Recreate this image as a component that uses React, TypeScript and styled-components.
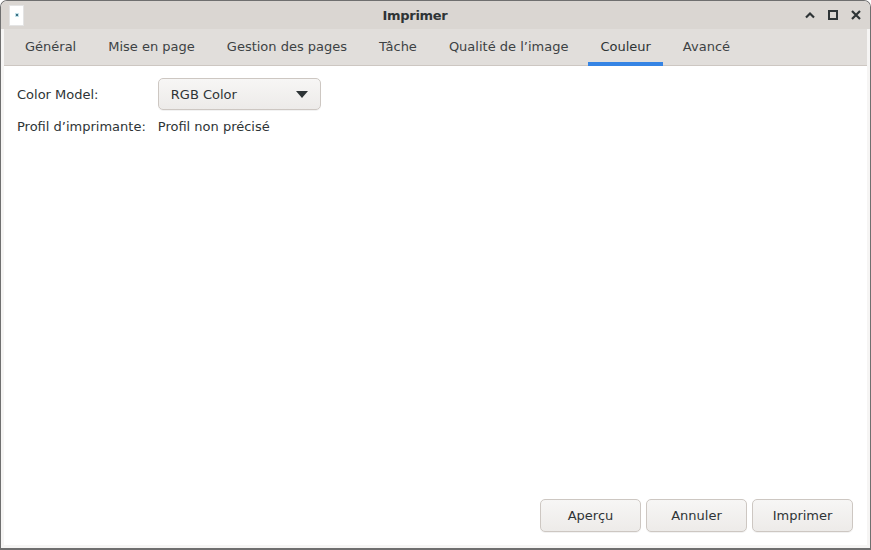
import styled, { createGlobalStyle } from "styled-components";

const GlobalStyle = createGlobalStyle`
  * { box-sizing: border-box; }
  html, body {
    margin: 0;
    padding: 0;
    background: #ffffff;
  }
  body {
    font-family: "DejaVu Sans", "Liberation Sans", sans-serif;
    font-size: 13px;
    color: #2e3436;
  }
`;

const tabs = [
  "Général",
  "Mise en page",
  "Gestion des pages",
  "Tâche",
  "Qualité de l’image",
  "Couleur",
  "Avancé",
];

export default function App() {
  return (
    <>
      <GlobalStyle />
      <Window>
        <TitleBar>
          <AppIcon>
            <IconDot />
          </AppIcon>
          <Title>Imprimer</Title>
          <TitleControls>
            <ControlButton aria-label="Réduire">
              <svg width="12" height="12" viewBox="0 0 12 12">
                <path d="M2 8.5 L6 4.5 L10 8.5" fill="none" stroke="#2e3436" strokeWidth="2.2" />
              </svg>
            </ControlButton>
            <ControlButton aria-label="Agrandir">
              <svg width="12" height="12" viewBox="0 0 12 12">
                <rect x="2" y="2" width="8" height="8" fill="none" stroke="#2e3436" strokeWidth="2" />
              </svg>
            </ControlButton>
            <ControlButton aria-label="Fermer">
              <svg width="12" height="12" viewBox="0 0 12 12">
                <path d="M2 2 L10 10 M10 2 L2 10" fill="none" stroke="#2e3436" strokeWidth="2.2" />
              </svg>
            </ControlButton>
          </TitleControls>
        </TitleBar>
        <Body>
          <TabBar>
            {tabs.map((t) => (
              <Tab key={t} active={t === "Couleur"}>
                {t}
              </Tab>
            ))}
          </TabBar>
          <Page>
            <Form>
              <Label>Color Model:</Label>
              <Combo>
                <span>RGB Color</span>
                <Arrow />
              </Combo>
              <Label>Profil d’imprimante:</Label>
              <Value>Profil non précisé</Value>
            </Form>
            <Footer>
              <Button>Aperçu</Button>
              <Button>Annuler</Button>
              <Button>Imprimer</Button>
            </Footer>
          </Page>
        </Body>
      </Window>
    </>
  );
}

const Window = styled.div`
  width: 871px;
  height: 550px;
  display: flex;
  flex-direction: column;
  border: 1px solid #6f6f6f;
  border-bottom-width: 2px;
  border-radius: 7px 7px 0 0;
  overflow: hidden;
  background: #f6f5f4;
`;

const TitleBar = styled.div`
  height: 28px;
  flex-shrink: 0;
  display: flex;
  align-items: center;
  padding: 0 8px;
  background: #dad6d2;
`;

const AppIcon = styled.div`
  width: 15px;
  height: 21px;
  margin-top: 1px;
  background: #ffffff;
  border: 1px solid #e4e4e4;
  display: flex;
  align-items: center;
  justify-content: center;
`;

const IconDot = styled.div`
  width: 2px;
  height: 2px;
  margin-top: -2px;
  background: #3b6f82;
  box-shadow: 0 0 0 1px #c4e2ea;
`;

const Title = styled.div`
  flex: 1;
  text-align: center;
  font-weight: bold;
  font-size: 13px;
  letter-spacing: -0.3px;
  color: #2e3436;
  padding-left: 2px;
`;

const TitleControls = styled.div`
  display: flex;
  align-items: center;
  gap: 11px;
`;

const ControlButton = styled.div`
  width: 12px;
  height: 12px;
  display: flex;
  svg {
    display: block;
  }
`;

const Body = styled.div`
  flex: 1;
  display: flex;
  flex-direction: column;
  padding: 0 3px 3px 3px;
  min-height: 0;
`;

const TabBar = styled.div`
  height: 37px;
  flex-shrink: 0;
  display: flex;
  padding-left: 5px;
  background: #e1dedb;
  box-shadow: inset 0 -1px #cdc7c2;
`;

const Tab = styled.div<{ active?: boolean }>`
  margin: 0 4px;
  padding: 0 12px 3px 12px;
  display: flex;
  align-items: center;
  color: ${({ active }) => (active ? "#2e3436" : "#3d4244")};
  box-shadow: ${({ active }) => (active ? "inset 0 -4px #3584e4" : "none")};
`;

const Page = styled.div`
  flex: 1;
  display: flex;
  flex-direction: column;
  background: #ffffff;
  padding: 12px 14px 13px 13px;
`;

const Form = styled.div`
  display: grid;
  grid-template-columns: auto auto;
  justify-content: start;
  align-items: center;
  column-gap: 12px;
  row-gap: 8px;
`;

const Label = styled.div`
  line-height: 16px;
  padding-top: 1px;
`;

const Value = styled.div`
  line-height: 16px;
  padding-top: 1px;
`;

const Combo = styled.div`
  width: 163px;
  height: 32px;
  display: flex;
  align-items: center;
  justify-content: space-between;
  padding: 0 12px;
  border: 1px solid #cdc7c2;
  border-radius: 5px;
  background: linear-gradient(to bottom, #f7f6f5, #edebe9);
  box-shadow: 0 1px rgba(0, 0, 0, 0.05);
`;

const Arrow = styled.div`
  width: 0;
  height: 0;
  border-left: 6px solid transparent;
  border-right: 6px solid transparent;
  border-top: 7px solid #2e3436;
`;

const Footer = styled.div`
  margin-top: auto;
  display: flex;
  justify-content: flex-end;
  gap: 5px;
`;

const Button = styled.div`
  width: 101px;
  height: 33px;
  display: flex;
  align-items: center;
  justify-content: center;
  border: 1px solid #cdc7c2;
  border-radius: 5px;
  background: linear-gradient(to bottom, #f7f6f5, #edebe9);
  box-shadow: 0 1px rgba(0, 0, 0, 0.05);
  color: #2e3436;
`;
